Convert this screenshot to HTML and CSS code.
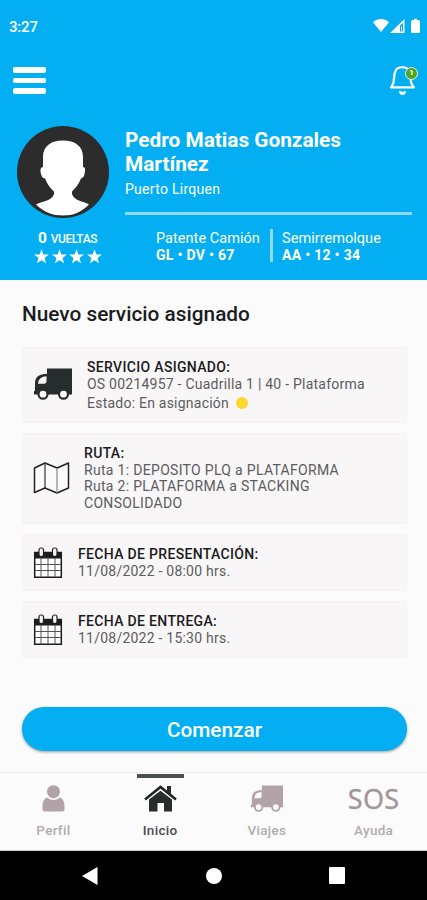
FILE: index.html
```html
<!DOCTYPE html>
<html lang="es">
<head>
<meta charset="utf-8">
<meta name="viewport" content="width=device-width, initial-scale=1">
<title>Servicio</title>
<link rel="stylesheet" href="styles.css">
</head>
<body>
<svg class="defs" width="0" height="0" aria-hidden="true">
  <symbol id="truck" viewBox="0 0 38 32">
    <path fill="currentColor" fill-rule="evenodd" d="M13 0.500H38V26.500H0V23H1V14.500C1.500 9 5 6 13 5.800ZM12.500 8.200C7.500 8.500 4.500 10.500 4 15.800H11L12.500 14Z"/>
    <circle cx="9" cy="26.200" r="4.500" fill="#fbfafb" stroke="currentColor" stroke-width="2.200"/>
    <circle cx="29.500" cy="26.200" r="4.500" fill="#fbfafb" stroke="currentColor" stroke-width="2.200"/>
  </symbol>
  <symbol id="calendar" viewBox="0 0 30 32">
    <path d="M1.700 5.500H28.300V30.300H1.700Z" fill="#fff" stroke="#1d1d1d" stroke-width="1.500"/>
    <path d="M1 5H29V11.500H1Z" fill="#1d1d1d"/>
    <path d="M8 11V30M15 11V30M22 11V30M2 17.500H28M2 23.500H28" stroke="#555" stroke-width="1" fill="none"/>
    <rect x="6" y="1" width="4.500" height="8.500" rx="2" fill="#f8f6f7" stroke="#222" stroke-width="1.200"/>
    <rect x="19.500" y="1" width="4.500" height="8.500" rx="2" fill="#f8f6f7" stroke="#222" stroke-width="1.200"/>
  </symbol>
  <symbol id="star" viewBox="0 0 24 24">
    <path fill="#fff" d="M12 0.500L15 8.600L23.800 8.900L16.900 14.300L19.300 22.700L12 17.800L4.700 22.700L7.100 14.300L0.200 8.900L9 8.600Z"/>
  </symbol>
</svg>
<div class="screen">
  <header class="hero">
    <div class="status">
      <span class="clock">3:27</span>
      <svg width="47" height="16" viewBox="0 0 47 16">
        <path fill="#fff" d="M0 4.200C4.500 0 11.500 0 16 4.200L8 14Z"/>
        <path fill="#fff" d="M17 15L31.500 1V15Z"/>
        <path fill="#03aff2" d="M27 7.500L30 5V13.500H27Z"/><path fill="#bce9fc" d="M28 8H29V13H28Z"/>
        <path fill="#fff" d="M39.500 2H41V0.800H44V2H45.500Q47 2 47 3.500V13.500Q47 15 45.500 15H39.500Q38 15 38 13.500V3.500Q38 2 39.500 2Z"/>
      </svg>
    </div>
    <div class="toolbar">
      <div class="menu"><i></i><i></i><i></i></div>
      <div class="bell">
        <svg width="30" height="32" viewBox="0 0 30 32">
          <path d="M2 22.300C6.500 18 3.800 11.500 6.500 6C8.500 1 18 1 20 6C22.300 11.500 20 18 25 22.300Z" fill="none" stroke="#fff" stroke-width="2.200" stroke-linejoin="round"/>
          <path fill="#fff" d="M10 26.200H12Q13.500 27.300 15 26.200H17Q16.700 30 13.500 30T10 26.200Z"/>
        </svg>
        <span class="badge">1</span>
      </div>
    </div>
    <div class="profile">
      <div class="left">
        <svg class="avatar" width="92" height="92" viewBox="0 0 92 92">
          <circle cx="46" cy="46" r="46" fill="#2d2c2d"/>
          <path fill="#fff" d="M46 14.500C58 14.500 66 20 66 31V41C68.500 41 68.500 44 67.500 48C66.800 52 65 51.500 64 52.500C62 58 58.500 62 55 65.500V68C57 75 66 75 72 78.500C64 86.500 56 89.500 46 89.500S27 86.500 19 78.500C26 75 35 75 37 68V65.500C33 62 30 58 28 52.500C26 52 25 51.500 24 48C23 44 23.500 41 26 41V31C26 20 34 14.500 46 14.500Z"/>
        </svg>
        <div class="laps"><b>0</b> <span>VUELTAS</span></div>
        <div class="stars">
          <svg><use href="#star"/></svg><svg><use href="#star"/></svg><svg><use href="#star"/></svg><svg><use href="#star"/></svg>
        </div>
      </div>
      <div class="info">
        <h1>Pedro Matias Gonzales<br>Martínez</h1>
        <p class="place">Puerto Lirquen</p>
        <div class="plates">
          <div class="plate p1"><span>Patente Camión</span><b>GL • DV • 67</b></div>
          <div class="plate p2"><span>Semirremolque</span><b>AA • 12 • 34</b></div>
        </div>
      </div>
    </div>
  </header>
  <main>
    <h2>Nuevo servicio asignado</h2>
    <section class="card service">
      <svg class="truck" width="38" height="32"><use href="#truck"/></svg>
      <div>
        <h3>SERVICIO ASIGNADO:</h3>
        <p>OS 00214957 - Cuadrilla 1 | 40 - Plataforma</p>
        <p class="state">Estado: En asignación <i class="dot"></i></p>
      </div>
    </section>
    <section class="card route">
      <svg width="37" height="32" viewBox="0 0 37 32">
        <path fill="#fbfafa" stroke="#222" stroke-width="1.500" stroke-linejoin="round" d="M1.500 6L12 1L24 6L35.500 1V26L24 31L12 26L1.500 30.500Z"/>
        <path fill="none" stroke="#333" stroke-width="1.200" d="M12 1V26"/><path fill="none" stroke="#888" stroke-width="1.200" d="M24 6V31"/>
      </svg>
      <div>
        <h3>RUTA:</h3>
        <p>Ruta 1: DEPOSITO PLQ a PLATAFORMA</p>
        <p>Ruta 2: PLATAFORMA a STACKING<br>CONSOLIDADO</p>
      </div>
    </section>
    <section class="card date">
      <svg width="30" height="32"><use href="#calendar"/></svg>
      <div><h3>FECHA DE PRESENTACIÓN:</h3><p>11/08/2022 - 08:00 hrs.</p></div>
    </section>
    <section class="card date">
      <svg width="30" height="32"><use href="#calendar"/></svg>
      <div><h3>FECHA DE ENTREGA:</h3><p>11/08/2022 - 15:30 hrs.</p></div>
    </section>
    <button class="start">Comenzar</button>
  </main>
  <nav class="tabs">
    <a class="tab">
      <span class="ico"><svg width="23" height="27" viewBox="0 0 23 27"><circle cx="11.500" cy="6.700" r="6.500" fill="#b2a3a9"/><path fill="#b2a3a9" d="M5 12.500Q11.500 17.500 18 12.500Q22.500 14.500 22.500 21V24Q22.500 26.500 20 26.500H3Q0.500 26.500 0.500 24V21Q0.500 14.500 5 12.500Z"/></svg></span>
      <span>Perfil</span>
    </a>
    <a class="tab active">
      <span class="ico"><svg width="33" height="27" viewBox="0 0 33 27">
        <path fill="none" stroke="#202223" stroke-width="2.600" d="M1 14.500L16.500 2L32 14.500"/>
        <path fill="#292c2d" d="M23 1H27V9.500L23 6.200ZM5 14.500L16.500 5.700L28 14.500V26.500H20V18H13.500V26.500H5Z"/>
      </svg></span>
      <span>Inicio</span>
    </a>
    <a class="tab muted-truck">
      <span class="ico"><svg width="32" height="27" viewBox="0 0 38 32" preserveAspectRatio="none"><use href="#truck" width="38" height="32"/></svg></span>
      <span>Viajes</span>
    </a>
    <a class="tab">
      <span class="ico sos">SOS</span>
      <span>Ayuda</span>
    </a>
  </nav>
  <footer class="system">
    <svg width="16" height="18" viewBox="0 0 16 18"><path fill="#fff" d="M0 9L15.500 0V18Z"/></svg>
    <svg width="16" height="16" viewBox="0 0 16 16"><circle cx="8" cy="8" r="8" fill="#fff"/></svg>
    <svg width="16" height="17" viewBox="0 0 16 17"><rect width="16" height="17" rx="1" fill="#fff"/></svg>
  </footer>
</div>
</body>
</html>
```
FILE: styles.css
```css
* { box-sizing: border-box; }
body, h1, h2, h3, p { margin: 0; }
body { font-family: Roboto, "Liberation Sans", sans-serif; background: #fbfbfb; }
svg { display: block; flex: none; }
.defs { position: absolute; }
.screen { width: 427px; height: 900px; display: flex; flex-direction: column; overflow: hidden; }

.hero { height: 280px; background: #03aff2; color: #fff; }
.status { display: flex; justify-content: space-between; padding: 18px 7px 0 9px; height: 65px; }
.clock { font-size: 15px; line-height: 18px; font-weight: 500; letter-spacing: -0.2px; }
.toolbar { display: flex; justify-content: space-between; padding: 0 8px 0 13px; height: 61px; }
.menu { display: flex; flex-direction: column; gap: 5px; padding-top: 2px; width: 33px; }
.menu i { height: 5.500px; border-radius: 2px; background: #fff; }
.bell { position: relative; width: 30px; }
.badge { position: absolute; left: 16px; top: 2px; width: 13px; height: 13px; border-radius: 50%; background: #4ea51f; border: 1.500px solid #e6f6e4; font-size: 8px; line-height: 10px; font-weight: 700; text-align: center; }

.profile { display: flex; padding: 0 15px 0 17px; }
.left { width: 108px; }
.laps { margin-top: 12px; padding-left: 21px; line-height: 17px; white-space: nowrap; font-size: 15.500px; }
.laps span { font-size: 12px; font-weight: 500; letter-spacing: -0.45px; }
.stars { display: flex; gap: 2.700px; padding-left: 17px; margin-top: 1px; }
.stars svg { width: 15px; height: 15px; }
.info { width: 287px; white-space: nowrap; padding-top: 3px; }
h1 { font-size: 20.800px; line-height: 23.500px; font-weight: 700; }
.place { font-size: 14px; line-height: 18px; letter-spacing: 0.28px; margin-top: 4px; padding-bottom: 14px; height: 35px; border-bottom: 3px solid #91d9f8; }
.plates { display: flex; padding: 14px 0 0 31px; }
.plate { font-size: 14.500px; line-height: 16px; height: 33px; letter-spacing: 0.04px; }
.plate span, .plate b { display: block; }
.plate b { font-size: 14px; letter-spacing: 0.28px; }
.p1 { width: 117px; border-right: 3px solid #91d9f8; padding-top: 2px; }
.p2 { padding: 2px 0 0 9px; }

main { height: 492px; padding: 22px 20px 0 22px; display: flex; flex-direction: column; gap: 10px; white-space: nowrap; }
h2 { font-size: 20.800px; line-height: 24px; font-weight: 500; color: #1c1c1e; margin-bottom: 11px; }
.card { display: flex; width: 385px; border: 1px solid #f3f1f2; border-radius: 3px; background: #f8f6f7; color: #5c5c5e; font-size: 14px; line-height: 16.600px; letter-spacing: 0.23px; }
.card h3 { font-size: 14px; line-height: 16.600px; font-weight: 500; letter-spacing: 0.33px; color: #1b1b1d; }
.service { height: 76px; padding: 11px 0 0 11px; }
.truck { color: #272c2d; margin: 9px 15px 0 0; }
.state { margin-top: 3px; display: flex; align-items: center; gap: 6.500px; }
.dot { width: 12px; height: 12px; border-radius: 50%; background: #fbd72f; }
.route { height: 91px; padding: 11px 0 0 10px; letter-spacing: 0.31px; }
.route svg { margin: 17px 14px 0 0; }
.date { height: 57px; padding: 11px 0 0 10px; }
.date svg { margin: 1px 15px 0 0; }
.start { width: 385px; height: 44px; margin-top: 39px; border: 0; border-radius: 22px; background: #03aff2; color: #fff; font: 500 20.800px/44px Roboto, "Liberation Sans", sans-serif; padding: 1px 0 0; box-shadow: 0 1px 3px rgba(0,0,0,.4); }

.tabs { height: 79px; display: grid; grid-template-columns: repeat(4, 1fr); border-top: 1px solid #ededed; border-bottom: 1px solid #c8c8c8; }
.tab { display: flex; flex-direction: column; align-items: center; color: #b0acae; font-size: 13.500px; line-height: 18px; font-weight: 500; letter-spacing: 0.3px; padding-top: 12px; }
.ico { height: 36px; }
.active { color: #4c4c4e; background: linear-gradient(#4c4f50, #4c4f50) 50% 1px / 47px 4px no-repeat; }
.muted-truck svg { color: #b2a3a9; }
.sos { font-family: "Noto Sans", sans-serif; font-size: 27px; line-height: 27px; font-weight: 400; letter-spacing: 0.4px; color: #a3959a; -webkit-text-stroke: 0.3px #a3959a; }
.system { height: 49px; background: #000; display: flex; align-items: center; justify-content: space-between; padding: 0 82px; }
```
